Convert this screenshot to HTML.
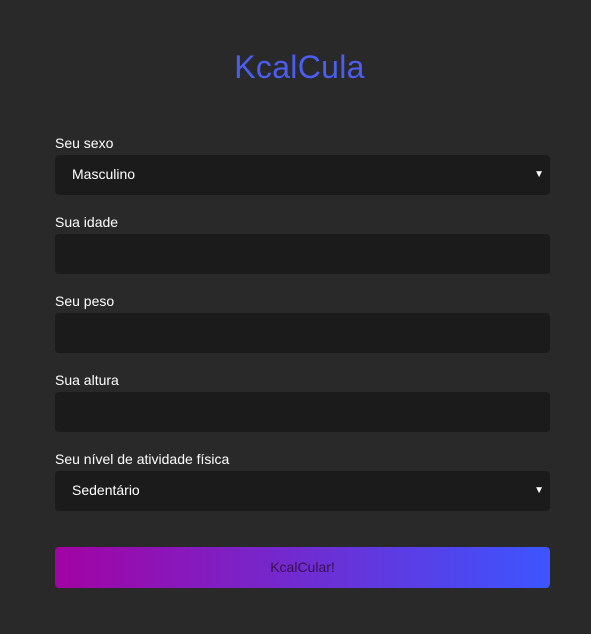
<!DOCTYPE html>
<html><head><style>
body{margin:0;background:#292929;width:591px;height:634px;font-family:"Liberation Sans",sans-serif;position:relative;overflow:hidden}
h1{position:absolute;top:49px;left:4px;width:591px;text-align:center;margin:0;font-weight:normal;font-size:32px;color:#4b5ef0;letter-spacing:0.3px}
.l{position:absolute;left:55px;color:#fff;font-size:14px}
.f{position:absolute;left:55px;width:495px;height:40px;background:#1b1b1b;border-radius:4px;color:#fff;font-size:14px;box-sizing:border-box;padding:11px 17px}
.f span.a{position:absolute;right:6px;top:14px;font-size:10px}
.b{position:absolute;left:55px;top:547px;width:495px;height:41px;border-radius:4px;background:linear-gradient(90deg,#a203a3,#3d55ff);color:#3a0f50;font-size:14px;text-align:center;line-height:41px}
</style></head><body>
<h1>KcalCula</h1>
<div class="l" style="top:135px">Seu sexo</div>
<div class="f" style="top:155px">Masculino<span class="a">▼</span></div>
<div class="l" style="top:214px">Sua idade</div>
<div class="f" style="top:234px"></div>
<div class="l" style="top:293px">Seu peso</div>
<div class="f" style="top:313px"></div>
<div class="l" style="top:372px">Sua altura</div>
<div class="f" style="top:392px"></div>
<div class="l" style="top:451px">Seu nível de atividade física</div>
<div class="f" style="top:471px">Sedentário<span class="a">▼</span></div>
<div class="b">KcalCular!</div>
</body></html>
